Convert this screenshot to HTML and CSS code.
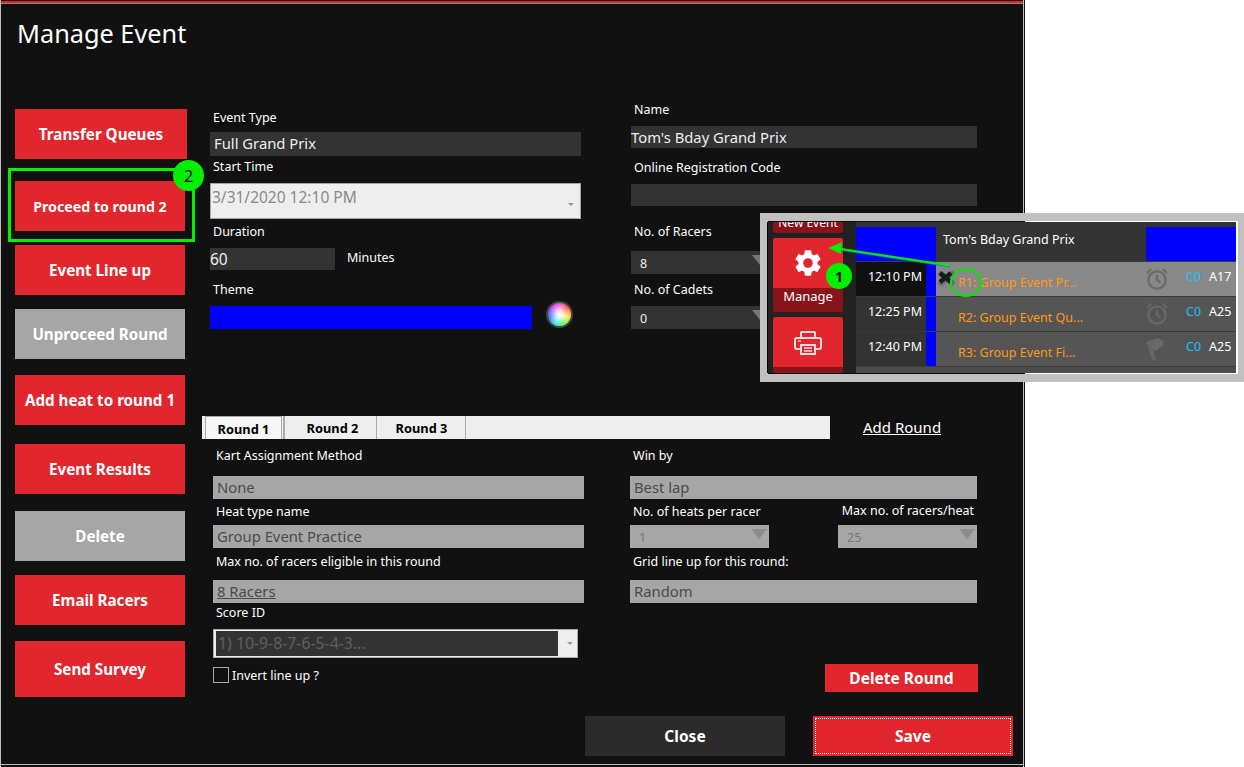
FILE: index.html
```html
<!DOCTYPE html>
<html lang="en">
<head>
<meta charset="utf-8">
<title>Manage Event</title>
<link rel="stylesheet" href="styles.css">
</head>
<body>
<div class="window">
  <h1 class="title">Manage Event</h1>
  <div class="body">
    <nav class="side">
      <button class="btn b1">Transfer Queues</button>
      <button class="btn b2">Proceed to round 2</button>
      <button class="btn b3">Event Line up</button>
      <button class="btn b3 off">Unproceed Round</button>
      <button class="btn b4">Add heat to round 1</button>
      <button class="btn b5">Event Results</button>
      <button class="btn b6 off">Delete</button>
      <button class="btn b3">Email Racers</button>
      <button class="btn b7">Send Survey</button>
    </nav>
    <main class="content">
      <section class="top">
        <div class="col-a">
          <div class="lbl m11">Event Type</div>
          <div class="field dark m5 h24">Full Grand Prix</div>
          <div class="lbl">Start Time</div>
          <div class="picker m7"><span>3/31/2020 12:10 PM</span><i class="caret"></i></div>
          <div class="lbl m2">Duration</div>
          <div class="dur m7">
            <div class="field dark num">60</div>
            <span class="lbl unit">Minutes</span>
          </div>
          <div class="lbl m9">Theme</div>
          <div class="theme m7">
            <div class="swatch"></div>
            <div class="wheel"></div>
          </div>
        </div>
        <div class="col-b">
          <div class="lbl m3">Name</div>
          <div class="field dark m7 h22">Tom's Bday Grand Prix</div>
          <div class="lbl m9">Online Registration Code</div>
          <div class="field dark m7 h22"></div>
          <div class="lbl m15">No. of Racers</div>
          <div class="spin dark m10"><span>8</span><i class="tri"></i></div>
          <div class="lbl m5">No. of Cadets</div>
          <div class="spin dark m7"><span>0</span><i class="tri"></i></div>
        </div>
      </section>
      <div class="tabline">
        <div class="tabs">
          <span class="tab active">Round 1</span>
          <span class="tab t2">Round 2</span>
          <span class="tab t3">Round 3</span>
        </div>
        <a class="add">Add Round</a>
      </div>
      <section class="round">
        <div class="col-c">
          <div class="lbl m6">Kart Assignment Method</div>
          <div class="field grey m11">None</div>
          <div class="lbl m2">Heat type name</div>
          <div class="field grey m4">Group Event Practice</div>
          <div class="lbl m3">Max no. of racers eligible in this round</div>
          <div class="field grey m9"><u>8 Racers</u></div>
          <div class="lbl up1">Score ID</div>
          <div class="score m7"><div class="score-in">1) 10-9-8-7-6-5-4-3...</div><i class="caret"></i></div>
          <label class="check m8"><i class="box"></i><span>Invert line up ?</span></label>
        </div>
        <div class="col-d">
          <div class="lbl m6">Win by</div>
          <div class="field grey m11">Best lap</div>
          <div class="pair m2">
            <div class="lbl">No. of heats per racer</div>
            <div class="lbl raise">Max no. of racers/heat</div>
          </div>
          <div class="pair m4">
            <div class="spin grey"><span>1</span><i class="tri"></i></div>
            <div class="spin grey"><span>25</span><i class="tri"></i></div>
          </div>
          <div class="lbl m3">Grid line up for this round:</div>
          <div class="field grey m9">Random</div>
          <button class="del">Delete Round</button>
        </div>
      </section>
      <footer class="foot">
        <button class="act close">Close</button>
        <button class="act save"><span class="dots">Save</span></button>
      </footer>
    </main>
  </div>
</div>

<div class="callout"><div class="frame"></div></div>

<div class="snap">
  <aside class="snap-side">
    <div class="tile new"><span>New Event</span></div>
    <div class="tile man">
      <div class="tile-top"><svg class="gear" viewBox="0 0 24 24"><path fill="#fff" d="M19.14 12.94c.04-.3.06-.61.06-.94 0-.32-.02-.64-.07-.94l2.03-1.58a.49.49 0 0 0 .12-.61l-1.92-3.32a.488.488 0 0 0-.59-.22l-2.39.96c-.5-.38-1.03-.7-1.62-.94l-.36-2.54a.484.484 0 0 0-.48-.41h-3.84c-.24 0-.43.17-.47.41l-.36 2.54c-.59.24-1.13.57-1.62.94l-2.39-.96c-.22-.08-.47 0-.59.22L2.74 8.87c-.12.21-.08.47.12.61l2.03 1.58c-.05.3-.09.63-.09.94s.02.64.07.94l-2.03 1.58a.49.49 0 0 0-.12.61l1.92 3.32c.12.22.37.29.59.22l2.39-.96c.5.38 1.03.7 1.62.94l.36 2.54c.05.24.24.41.48.41h3.84c.24 0 .44-.17.47-.41l.36-2.54c.59-.24 1.13-.56 1.62-.94l2.39.96c.22.08.47 0 .59-.22l1.92-3.32c.12-.22.07-.47-.12-.61l-2.01-1.58zM12 15.6c-1.98 0-3.6-1.62-3.6-3.6s1.62-3.6 3.6-3.6 3.6 1.62 3.6 3.6-1.62 3.6-3.6 3.6z"/></svg></div>
      <div class="tile-bot">Manage</div>
    </div>
    <div class="tile prn">
      <div class="tile-top"><svg class="printer" viewBox="0 0 28 26" fill="none" stroke="#fcdcdc" stroke-width="2"><path d="M7 8V3a1 1 0 0 1 1-1h12a1 1 0 0 1 1 1v5"/><path d="M6 19H3a2 2 0 0 1-2-2v-7a2 2 0 0 1 2-2h22a2 2 0 0 1 2 2v7a2 2 0 0 1-2 2h-3"/><path d="M7 15h14v9H7z"/><path d="M10 18h8M10 21h8" stroke-width="1.4"/><path d="M4 11h3" stroke-width="1.4"/></svg></div>
    </div>
  </aside>
  <div class="snap-main">
    <div class="strip"></div>
    <div class="head">
      <div class="head-blue"></div>
      <div class="head-name">Tom's Bday Grand Prix</div>
      <div class="head-end"></div>
    </div>
    <div class="row first">
      <div class="time">12:10 PM</div><div class="bar"></div>
      <div class="row-name">R1: Group Event Pr...</div>
      <svg class="state" viewBox="0 0 24 24" fill="none" stroke="#6b6b6b" stroke-width="2.4"><circle cx="12" cy="13" r="8.6"/><path d="M12 8v5l3.500 2.500"/><path d="M2 6l4-4M22 6l-4-4"/></svg>
      <div class="c">C0</div><div class="a">A17</div>
    </div>
    <div class="row">
      <div class="time">12:25 PM</div><div class="bar"></div>
      <div class="row-name">R2: Group Event Qu...</div>
      <svg class="state" viewBox="0 0 24 24" fill="none" stroke="#686868" stroke-width="2.4"><circle cx="12" cy="13" r="8.6"/><path d="M12 8v5l3.500 2.500"/><path d="M2 6l4-4M22 6l-4-4"/></svg>
      <div class="c">C0</div><div class="a">A25</div>
    </div>
    <div class="row">
      <div class="time">12:40 PM</div><div class="bar"></div>
      <div class="row-name">R3: Group Event Fi...</div>
      <svg class="state" viewBox="0 0 24 24"><path fill="#686868" d="M1 5 13 1l6 4-2 4-6 5-3-1.500L11 23l-3 1z"/></svg>
      <div class="c">C0</div><div class="a">A25</div>
    </div>
  </div>
  <svg class="marks" viewBox="0 1 468 151">
    <path d="M172 52l11 9M183 52l-11 9" stroke="#6a6a6a" stroke-width="5.500" stroke-linecap="round" transform="translate(1 1)"/>
    <path d="M172 52l11 9M183 52l-11 9" stroke="#1a1a1a" stroke-width="4.500"/>
    <path d="M182 45.500 70 28.500" stroke="#0f7fb0" stroke-width="1.500"/>
    <path d="M182 44.500 70 27.500" stroke="#00ee00" stroke-width="2"/>
    <path d="M60 27l14-6-1 12z" fill="#00ee00"/>
    <ellipse cx="198" cy="61.500" rx="15" ry="13.500" fill="none" stroke="#00e800" stroke-width="2"/>
  </svg>
  <div class="badge small">1</div>
</div>

<div class="focus"></div>
<div class="badge big">2</div>
</body>
</html>
```
FILE: styles.css
```css
* { box-sizing: border-box; }
html, body { margin: 0; height: 767px; overflow: hidden; background: #fff; }
body { font-family: "Noto Sans", "Open Sans", sans-serif; color: #fff; position: relative; }
button { font-family: inherit; border: 0; padding: 0; color: #fff; }

.window {
  width: 1025px; height: 767px; background: #111; padding: 3px 0 0 1px;
  box-shadow:
    inset -1px 0 #111, inset -2px 0 #bdbdbd, inset 1px 0 #bdbdbd,
    inset 0 1px #111, inset 0 3px #e1262d, inset 0 4px #8a8a8a,
    inset 0 -2px #111, inset 0 -3px #bdbdbd;
}
.title { margin: 0; height: 93px; padding: 12px 0 0 16px; font-size: 25.300px; font-weight: 400; line-height: 36px; }
.body { display: flex; }

.side { width: 201px; padding: 13px 0 0 14px; display: flex; flex-direction: column; align-items: flex-start; }
.btn { width: 170px; height: 50px; background: #e1262d; font-size: 15.200px; font-weight: 700; flex: none; }
.btn.off { background: #a6a6a6; }
.b1 { width: 172px; }
.b2 { margin-top: 22px; font-size: 14.200px; }
.b3 { margin-top: 14px; }
.b4 { margin-top: 16px; }
.b5 { margin-top: 19px; }
.b6 { margin-top: 17px; }
.b7 { margin-top: 16px; height: 56px; }

.content { flex: 1; display: flex; flex-direction: column; }
.top { height: 320px; display: flex; padding-left: 8px; }
.col-a { width: 421px; }
.col-b { width: 346px; }

.lbl { font-size: 12.500px; line-height: 22px; height: 20px; padding-left: 3px; white-space: nowrap; }
.m2 { margin-top: 2px; } .m3 { margin-top: 3px; } .m4 { margin-top: 4px; } .m5 { margin-top: 5px; }
.m6 { margin-top: 6px; } .m7 { margin-top: 7px; } .m8 { margin-top: 8px; } .m9 { margin-top: 9px; }
.m10 { margin-top: 10px; } .m11 { margin-top: 11px; } .m15 { margin-top: 15px; }
.up1 { margin-top: -1px; }

.field { font-size: 14.800px; white-space: nowrap; display: flex; align-items: center; }
.dark { background: #333; color: #eee; }
.grey { background: #a6a6a6; color: #4b4b4b; height: 23px; padding: 0 0 2px 4px; }
.h24 { height: 24px; width: 371px; padding: 0 0 2px 4px; }
.h22 { height: 22px; padding-bottom: 1px; }

.picker {
  width: 371px; height: 36px; background: #eee; border: 1px solid #a5a5a5;
  color: #8a8a8a; font-size: 15.500px; padding: 2px 6px 0 1px;
  display: flex; justify-content: space-between;
}
.caret { width: 0; height: 0; border: 3px solid transparent; border-top: 3px solid #999; border-bottom: 0; align-self: center; flex: none; }
.picker .caret { margin-top: 4px; }
.dur { display: flex; }
.num { width: 125px; height: 22px; font-size: 15.500px; padding-bottom: 1px; }
.unit { padding-left: 12px; margin-top: -1px; }
.theme { display: flex; align-items: flex-start; height: 23px; }
.swatch { width: 322px; height: 23px; background: #00f; }
.wheel {
  width: 27px; height: 27px; margin: -5px 0 0 14px; border-radius: 50%;
  background:
    radial-gradient(circle, #fff 0, rgba(255,255,255,.75) 25%, rgba(255,255,255,0) 68%),
    conic-gradient(#ff4fd0, #ff5a3c, #ffe030, #5cff4a, #30e8e8, #3a6cff, #b040ff, #ff4fd0);
  border: 2px solid #444;
}
.spin { display: flex; justify-content: space-between; align-items: center; height: 23px; width: 139px; font-size: 12.500px; padding: 2px 2px 0 9px; }
.spin.dark { color: #eee; }
.spin.grey { color: #777; }
.tri { width: 0; height: 0; border: 8px solid transparent; border-top: 10px solid #8c8c8c; border-bottom: 0; margin-top: -7px; }
.spin.dark .tri { border-top-color: #777; margin-right: 0; }

.tabline { height: 23px; display: flex; align-items: center; }
.tabs { width: 628px; height: 23px; background: #eee; display: flex; color: #000; font-size: 12.800px; font-weight: 700; }
.tab { height: 23px; width: 89px; line-height: 25px; text-align: center; border-right: 1px solid #aaa; padding-left: 1px; }
.tab.active { width: 77px; margin: 0 6px 0 3px; border: 1px solid #aaa; border-bottom: 0; box-shadow: 1px 0 0 #eee, 3px 0 0 #aaa; background: #f6f6f6; line-height: 25px; padding-left: 0; }
.tab.t2 { width: 89px; }
.add { margin: -2px 0 0 33px; font-size: 15px; text-decoration: underline; color: #fff; }

.round { display: flex; height: 277px; padding-left: 11px; }
.col-c { width: 417px; }
.col-d { width: 347px; display: flex; flex-direction: column; }
.col-c .field { width: 371px; }
.score { height: 29px; background: #eee; border: 1px solid #aaa; padding: 2px; display: flex; align-items: center; width: 365px; }
.score-in { width: 342px; height: 25px; background: #333; color: #5f5f5f; font-size: 15.800px; line-height: 24px; padding-left: 2px; white-space: nowrap; }
.score .caret { margin-left: 9px; }
.check { display: flex; align-items: center; font-size: 12.500px; }
.check span { padding-top: 1px; }
.box { width: 16px; height: 16px; border: 1px solid #aaa; margin-right: 3px; }
.pair { display: flex; justify-content: space-between; }
.raise { margin-top: -1px; padding-right: 3px; }
.del { align-self: flex-end; width: 153px; height: 28px; margin: 61px -1px 0 0; background: #e1262d; font-size: 15.500px; font-weight: 700; }

.foot { display: flex; padding-left: 383px; }
.act { width: 200px; height: 40px; font-size: 15.500px; font-weight: 700; }
.close { background: #2b2b2b; }
.save { margin-left: 28px; background: #e1262d; padding: 2px; }
.dots { display: flex; width: 100%; height: 100%; align-items: center; justify-content: center; border: 1px dotted #fff; }

.focus { position: absolute; left: 8px; top: 168px; width: 187px; height: 74px; border: 3px solid #00f000; }
.badge { position: absolute; border-radius: 50%; background: #00f000; color: #000; display: flex; align-items: center; justify-content: center; }
.badge.big { left: 173px; top: 160px; width: 31px; height: 31px; font-size: 16px; }
.badge.small { left: 58px; top: 41px; width: 26px; height: 26px; font-size: 14px; font-weight: 700; }

.callout { position: absolute; left: 760px; top: 213px; width: 484px; height: 169px; border: 8px solid #c0c0c0; border-right-width: 6px; }
.frame { height: 100%; border: 1px solid #fff; border-width: 1px 2px 1px 0; position: relative; }
.frame::before { content: ""; position: absolute; left: 0; top: -1px; bottom: -1px; width: 257px; background: #0c0c0c; }
.snap { position: absolute; left: 768px; top: 222px; width: 468px; height: 151px; display: flex; overflow: hidden; background: #222; box-shadow: -1px 0 #000; }
.snap-side { width: 88px; background: #222; padding-left: 5px; flex: none; }
.tile { width: 70px; border-radius: 2px; overflow: hidden; }
.new { height: 11px; background: #86141a; font-size: 12px; text-align: center; }
.new span { display: block; height: 11px; line-height: 2px; }
.man { margin-top: 5px; height: 74px; background: #86141a; }
.tile-top { background: #e1262d; height: 50px; display: flex; align-items: center; justify-content: center; }
.tile-bot { height: 24px; font-size: 13px; text-align: center; line-height: 16px; }
.gear { width: 32px; height: 32px; margin-top: -1px; }
.prn { margin-top: 5px; height: 56px; background: #86141a; }
.printer { width: 28px; height: 26px; margin-top: 1px; }
.snap-main { flex: 1; background: #4c4c4c; }
.strip { height: 5px; background: #333; }
.head { height: 35px; display: flex; background: #333; border-bottom: 1px solid #3a3a3a; }
.head-blue { width: 80px; background: #00f; }
.head-name { width: 210px; padding: 3px 0 0 7px; font-size: 12.500px; line-height: 20px; }
.head-end { flex: 1; background: #00f; }
.row { height: 35px; display: flex; background: #555; border-bottom: 1px solid #3a3a3a; font-size: 12.500px; }
.row.first { background: #888; }
.time { width: 70px; background: #333; text-align: right; padding: 5px 4px 0 0; line-height: 20px; }
.first .time { background: #111; }
.bar { width: 10px; background: #00f; }
.row-name { width: 209px; padding: 11px 0 0 22px; color: #ff9a14; line-height: 20px; white-space: nowrap; }
.state { width: 24px; height: 24px; margin-top: 5px; flex: none; }
.c { color: #14c0ff; margin-left: 17px; width: 23px; padding-top: 5px; line-height: 20px; flex: none; }
.a { padding-top: 5px; line-height: 20px; }
.marks { position: absolute; left: 0; top: 0; width: 468px; height: 151px; }
```
